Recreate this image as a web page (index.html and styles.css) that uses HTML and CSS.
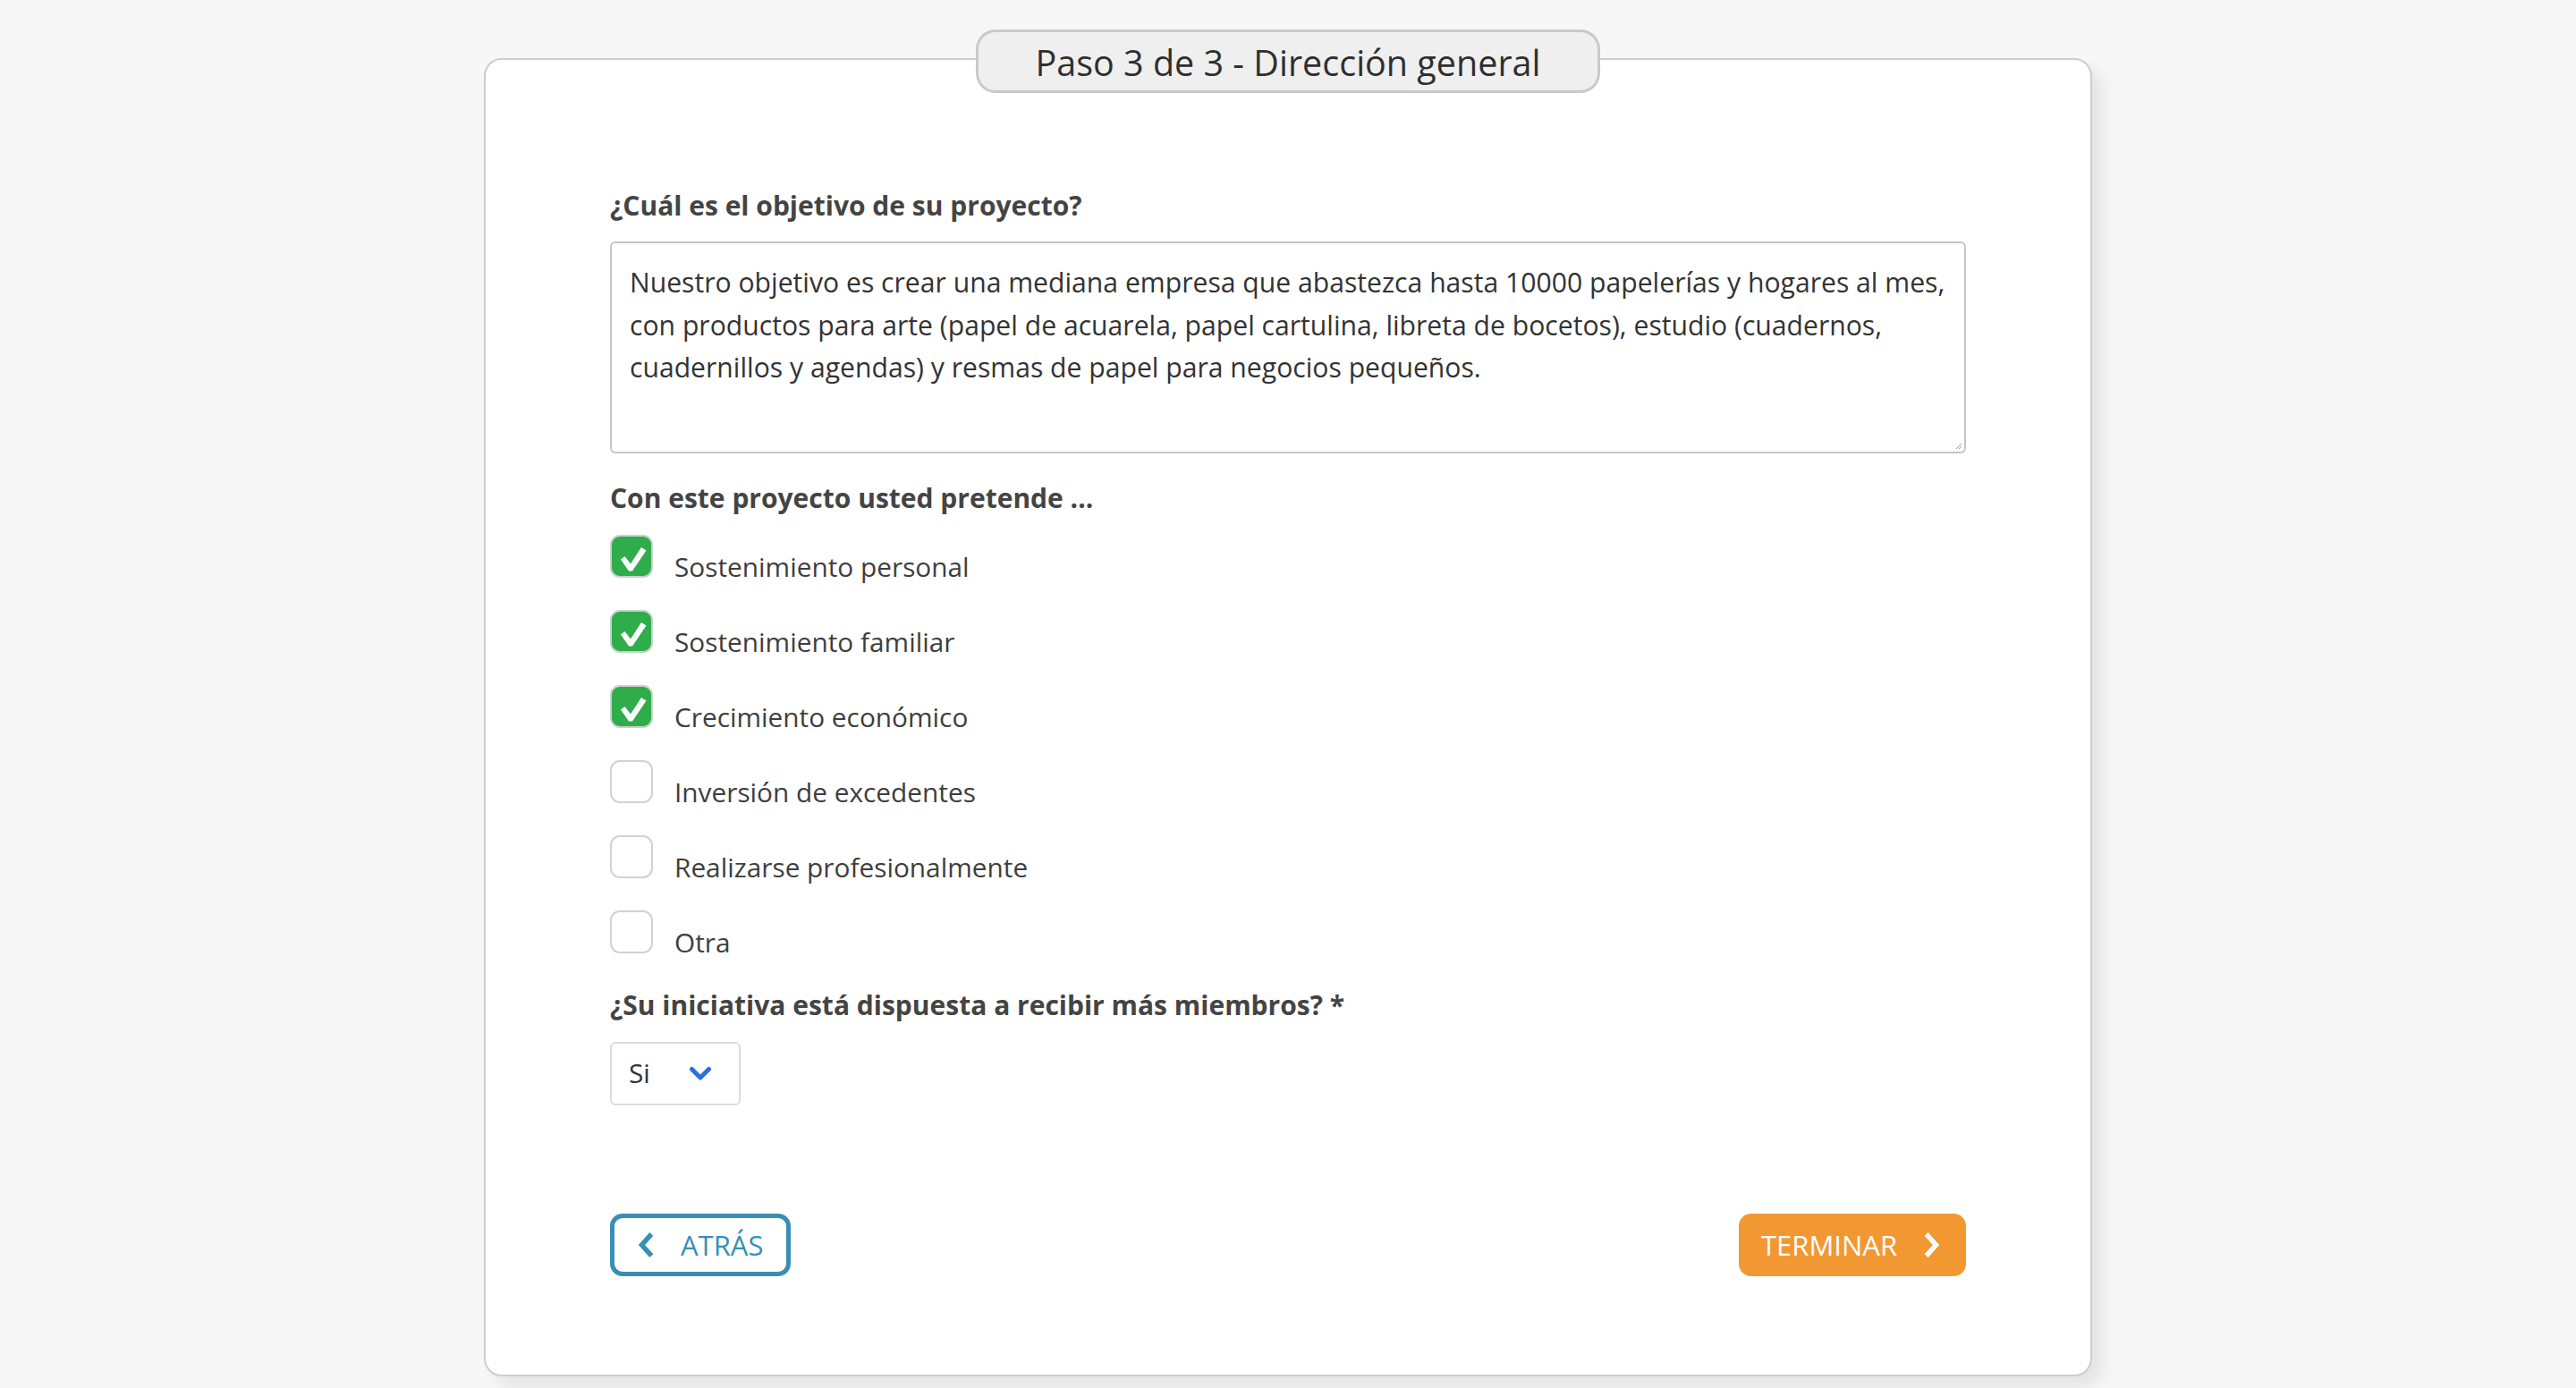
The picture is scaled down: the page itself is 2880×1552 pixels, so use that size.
FILE: index.html
```html
<!DOCTYPE html>
<html lang="es">
<head>
<meta charset="utf-8">
<title>Paso 3 de 3 - Dirección general</title>
<link rel="stylesheet" href="styles.css">
</head>
<body>
<main class="page">
  <section class="card">
    <div class="step-pill">Paso 3 de 3 - Dirección general</div>

    <label class="q-label" for="objetivo">¿Cuál es el objetivo de su proyecto?</label>
    <div class="textarea" id="objetivo">Nuestro objetivo es crear una mediana empresa que abastezca hasta 10000 papelerías y hogares al mes, con productos para arte (papel de acuarela, papel cartulina, libreta de bocetos), estudio (cuadernos, cuadernillos y agendas) y resmas de papel para negocios pequeños.<svg class="grip" width="8" height="8" viewBox="0 0 8 8"><path d="M7 1 L1 7 M7 4 L4 7" stroke="#9a9a9a" stroke-width="1"/></svg></div>

    <div class="q-label q-label--list">Con este proyecto usted pretende ...</div>
    <ul class="checks">
      <li class="check-row"><span class="box box--on"><svg viewBox="0 0 48 48" width="48" height="48"><path d="M12 27.5 L16.5 24 L23 32.5 L35 14 L40.5 17.5 L25 40.5 L21 40.5 Z" fill="#fff"/></svg></span><span class="check-text">Sostenimiento personal</span></li>
      <li class="check-row"><span class="box box--on"><svg viewBox="0 0 48 48" width="48" height="48"><path d="M12 27.5 L16.5 24 L23 32.5 L35 14 L40.5 17.5 L25 40.5 L21 40.5 Z" fill="#fff"/></svg></span><span class="check-text">Sostenimiento familiar</span></li>
      <li class="check-row"><span class="box box--on"><svg viewBox="0 0 48 48" width="48" height="48"><path d="M12 27.5 L16.5 24 L23 32.5 L35 14 L40.5 17.5 L25 40.5 L21 40.5 Z" fill="#fff"/></svg></span><span class="check-text">Crecimiento económico</span></li>
      <li class="check-row"><span class="box"></span><span class="check-text">Inversión de excedentes</span></li>
      <li class="check-row"><span class="box"></span><span class="check-text">Realizarse profesionalmente</span></li>
      <li class="check-row"><span class="box"></span><span class="check-text">Otra</span></li>
    </ul>

    <div class="q-label q-label--select">¿Su iniciativa está dispuesta a recibir más miembros? *</div>
    <div class="select">
      <span class="select-value">Si</span>
      <svg class="select-chev" width="26" height="18" viewBox="0 0 26 18"><path d="M3.5 3.5 L13 13 L22.5 3.5" fill="none" stroke="#2d6fdc" stroke-width="5" stroke-linecap="round" stroke-linejoin="round"/></svg>
    </div>

    <div class="actions">
      <button class="btn btn--back" type="button">
        <svg width="18" height="28" viewBox="0 0 18 28"><path d="M13.5 4 L4.5 14 L13.5 24" fill="none" stroke="#388fb4" stroke-width="5.5" stroke-linecap="square" stroke-linejoin="miter"/></svg>
        <span>ATRÁS</span>
      </button>
      <button class="btn btn--finish" type="button">
        <span>TERMINAR</span>
        <svg width="18" height="28" viewBox="0 0 18 28"><path d="M4.5 4 L13.5 14 L4.5 24" fill="none" stroke="#ffffff" stroke-width="5.5" stroke-linecap="square" stroke-linejoin="miter"/></svg>
      </button>
    </div>
  </section>
</main>
</body>
</html>
```

FILE: styles.css
```css
* {
  box-sizing: border-box;
}

html, body {
  margin: 0;
  padding: 0;
  background: #f7f7f7;
}

body {
  font-family: "Open Sans", "Noto Sans", "Liberation Sans", sans-serif;
  color: #3a3a3a;
  min-height: 1552px;
}

.page {
  display: flex;
  justify-content: center;
  padding-top: 65px;
}

.card {
  position: relative;
  width: 1798px;
  background: #ffffff;
  border: 2px solid #cdcdcd;
  border-radius: 20px;
  box-shadow: 12px 12px 18px rgba(0, 0, 0, 0.08);
  padding: 143px 139px 110px;
  display: flex;
  flex-direction: column;
  align-items: flex-start;
}

.step-pill {
  position: absolute;
  top: -34px;
  left: 50%;
  transform: translateX(-50%);
  width: 698px;
  height: 71px;
  background: #efefef;
  border: 3px solid #c9c9c9;
  border-radius: 22px;
  display: flex;
  align-items: center;
  justify-content: center;
  font-size: 39.5px;
  color: #2f2f2f;
  padding-top: 3px;
}

.q-label {
  display: block;
  font-size: 30px;
  font-weight: 700;
  line-height: 40px;
  color: #444444;
}

.textarea {
  position: relative;
  margin-top: 20px;
  width: 100%;
  height: 237px;
  border: 2px solid #c4c4c4;
  border-radius: 6px;
  padding: 20px 20px;
  font-size: 30.15px;
  line-height: 47.5px;
  color: #333333;
}

.grip {
  position: absolute;
  right: 2px;
  bottom: 2px;
}

.q-label--list {
  margin-top: 30px;
}

.checks {
  list-style: none;
  margin: 21px 0 0;
  padding: 0;
  display: flex;
  flex-direction: column;
}

.check-row {
  display: flex;
  align-items: flex-start;
  height: 84px;
}

.box {
  width: 48px;
  height: 48px;
  border: 2px solid #d2d2d2;
  border-radius: 11px;
  background: #ffffff;
  flex: none;
  overflow: hidden;
  display: flex;
  align-items: center;
  justify-content: center;
}

.box--on {
  background: #2fad4b;
  border-color: #c8d2ca;
}

.box--on svg {
  flex: none;
  margin: -2px;
}

.check-text {
  margin-left: 24px;
  margin-top: 16px;
  font-size: 29.8px;
  line-height: 40px;
  color: #3e3e3e;
}

.q-label--select {
  margin-top: 2px;
}

.select {
  margin-top: 21px;
  width: 146px;
  height: 71px;
  border: 2px solid #dcdcdc;
  border-radius: 6px;
  display: flex;
  align-items: center;
  padding-left: 19px;
  padding-bottom: 2px;
}

.select-value {
  font-size: 29.8px;
  color: #333333;
  width: 67px;
  flex: none;
}

.select-chev {
  flex: none;
  margin-top: 2px;
}

.actions {
  margin-top: 121px;
  width: 100%;
  display: flex;
  justify-content: space-between;
}

.btn {
  height: 70px;
  border-radius: 14px;
  font-family: inherit;
  font-size: 31px;
  display: flex;
  align-items: center;
  cursor: pointer;
}

.btn--back {
  width: 202px;
  background: #ffffff;
  border: 5px solid #388fb4;
  color: #388fb4;
  padding: 0 0 0 26px;
  gap: 30px;
}

.btn--finish {
  width: 254px;
  background: #f29832;
  border: none;
  color: #ffffff;
  padding: 0 0 0 25px;
  gap: 30px;
}
```
